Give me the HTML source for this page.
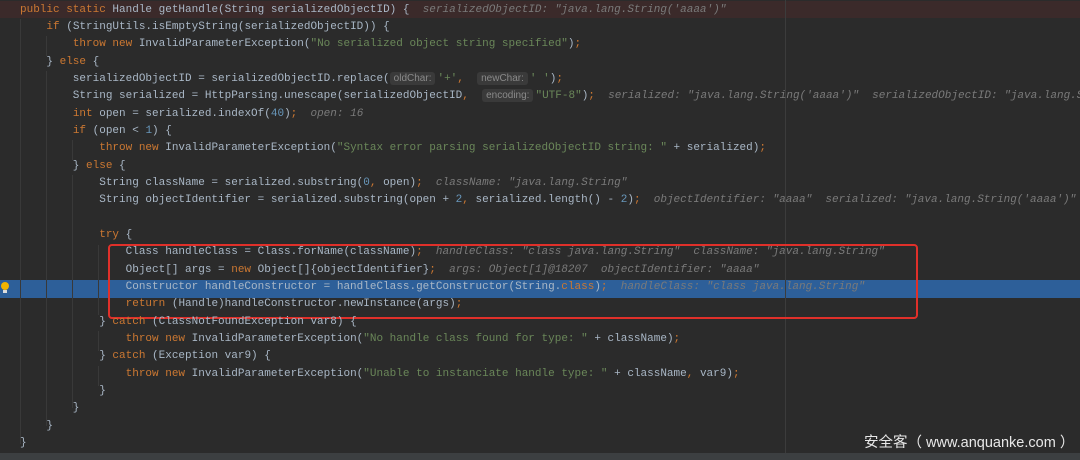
<!DOCTYPE html>
<html style="overflow:hidden;width:1080px;height:460px"><head><meta charset="utf-8"><style>
body{margin:0;width:1080px;height:460px;background:#2b2b2b;overflow:hidden;position:relative;font-family:"Liberation Mono",monospace;font-size:11px;color:#a9b7c6}
.l{position:absolute;left:20px;height:17.35px;line-height:17.35px;white-space:pre}
.k{color:#cc7832}.s{color:#6a8759}.n{color:#6897bb}
.h{color:#7a7a7a;font-style:italic}
.p{display:inline-block;background:#3a3a3a;color:#8a8a8a;font-family:"Liberation Sans",sans-serif;font-size:10px;padding:0 4px;border-radius:3px;line-height:13px;margin-right:2px}
.g{position:absolute;width:1px;background:#393939}
</style></head><body>
<div style="position:absolute;left:0;top:1px;width:1080px;height:17px;background:#3b2a2a"></div>
<div style="position:absolute;left:0;top:280px;width:1080px;height:17.5px;background:#2d5f99"></div>
<div style="position:absolute;left:785px;top:0;width:1px;height:453px;background:#3c3c3c"></div>
<div class="g" style="left:20px;top:19px;height:425px"></div>
<div class="g" style="left:46px;top:36px;height:20px"></div>
<div class="g" style="left:46px;top:71px;height:355px"></div>
<div class="g" style="left:72px;top:140px;height:20px"></div>
<div class="g" style="left:72px;top:175px;height:233px"></div>
<div class="g" style="left:98px;top:245px;height:70px"></div>
<div class="g" style="left:98px;top:331px;height:20px"></div>
<div class="g" style="left:98px;top:366px;height:20px"></div>
<div style="position:absolute;left:108px;top:244px;width:806px;height:71px;border:2px solid #e0302a;border-radius:4px"></div>
<div style="position:absolute;left:0;top:281px;width:10px;height:14px"><div style="width:8px;height:8px;border-radius:50%;background:#f0b400;margin:1px 0 0 1px"></div><div style="width:4px;height:3px;background:#ddd;margin-left:3px"></div></div>

<div style="position:absolute;left:0;top:0;width:1080px;height:460px;overflow:hidden">
<div class="l" style="top:1.5px"><span class="k">public static </span>Handle getHandle(String serializedObjectID) {  <span class="h">serializedObjectID: "java.lang.String('aaaa')"</span></div>
<div class="l" style="top:18.9px">    <span class="k">if </span>(StringUtils.isEmptyString(serializedObjectID)) {</div>
<div class="l" style="top:36.2px">        <span class="k">throw new </span>InvalidParameterException(<span class="s">"No serialized object string specified"</span>)<span class="k">;</span></div>
<div class="l" style="top:53.6px">    } <span class="k">else </span>{</div>
<div class="l" style="top:70.9px">        serializedObjectID = serializedObjectID.replace(<span class="p">oldChar:</span><span class="s">'+'</span><span class="k">, </span> <span class="p">newChar:</span><span class="s">' '</span>)<span class="k">;</span></div>
<div class="l" style="top:88.3px">        String serialized = HttpParsing.unescape(serializedObjectID<span class="k">, </span> <span class="p">encoding:</span><span class="s">"UTF-8"</span>)<span class="k">;</span>  <span class="h">serialized: "java.lang.String('aaaa')"  serializedObjectID: "java.lang.String('aaaa')"</span></div>
<div class="l" style="top:105.6px">        <span class="k">int </span>open = serialized.indexOf(<span class="n">40</span>)<span class="k">;</span>  <span class="h">open: 16</span></div>
<div class="l" style="top:123px">        <span class="k">if </span>(open &lt; <span class="n">1</span>) {</div>
<div class="l" style="top:140.3px">            <span class="k">throw new </span>InvalidParameterException(<span class="s">"Syntax error parsing serializedObjectID string: " </span>+ serialized)<span class="k">;</span></div>
<div class="l" style="top:157.7px">        } <span class="k">else </span>{</div>
<div class="l" style="top:175px">            String className = serialized.substring(<span class="n">0</span><span class="k">, </span>open)<span class="k">;</span>  <span class="h">className: "java.lang.String"</span></div>
<div class="l" style="top:192.4px">            String objectIdentifier = serialized.substring(open + <span class="n">2</span><span class="k">, </span>serialized.length() - <span class="n">2</span>)<span class="k">;</span>  <span class="h">objectIdentifier: "aaaa"  serialized: "java.lang.String('aaaa')"</span></div>
<div class="l" style="top:226.9px">            <span class="k">try </span>{</div>
<div class="l" style="top:244.3px">                Class handleClass = Class.forName(className)<span class="k">;</span>  <span class="h">handleClass: "class java.lang.String"  className: "java.lang.String"</span></div>
<div class="l" style="top:261.6px">                Object[] args = <span class="k">new </span>Object[]{objectIdentifier}<span class="k">;</span>  <span class="h">args: Object[1]@18207  objectIdentifier: "aaaa"</span></div>
<div class="l" style="top:279px">                Constructor handleConstructor = handleClass.getConstructor(String.<span class="k">class</span>)<span class="k">;</span>  <span class="h">handleClass: "class java.lang.String"</span></div>
<div class="l" style="top:296.3px">                <span class="k">return </span>(Handle)handleConstructor.newInstance(args)<span class="k">;</span></div>
<div class="l" style="top:313.7px">            } <span class="k">catch </span>(ClassNotFoundException var8) {</div>
<div class="l" style="top:331px">                <span class="k">throw new </span>InvalidParameterException(<span class="s">"No handle class found for type: " </span>+ className)<span class="k">;</span></div>
<div class="l" style="top:348.4px">            } <span class="k">catch </span>(Exception var9) {</div>
<div class="l" style="top:365.7px">                <span class="k">throw new </span>InvalidParameterException(<span class="s">"Unable to instanciate handle type: " </span>+ className<span class="k">, </span>var9)<span class="k">;</span></div>
<div class="l" style="top:383.1px">            }</div>
<div class="l" style="top:400.4px">        }</div>
<div class="l" style="top:417.8px">    }</div>
<div class="l" style="top:435.1px">}</div>
</div>
<div style="position:absolute;left:0;top:453px;width:1080px;height:7px;background:#3c3f41"></div>
<div style="position:absolute;left:864px;top:431px;color:#e8e8e8;font-family:'Liberation Sans','Noto Sans CJK SC',sans-serif;font-size:14.5px;white-space:nowrap">安全客（ www.anquanke.com ）</div>
</body></html>
